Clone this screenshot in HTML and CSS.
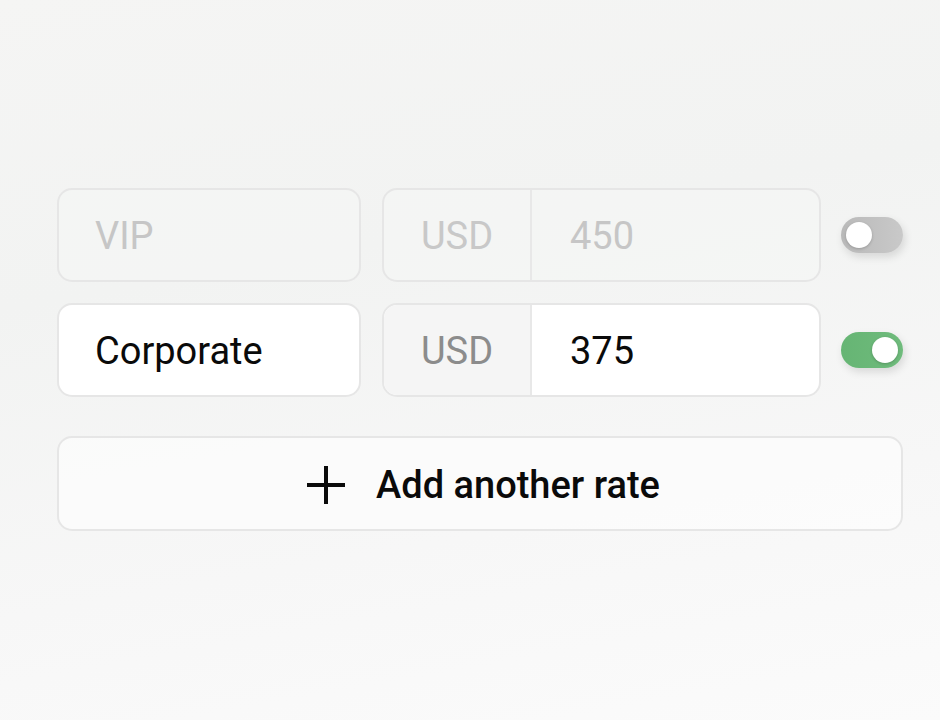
FILE: index.html
```html
<!DOCTYPE html>
<html>
<head>
<meta charset="utf-8">
<link rel="stylesheet" href="styles.css">
</head>
<body>
<div class="page">
  <div class="rates">
    <div class="row disabled">
      <div class="field name">VIP</div>
      <div class="field money">
        <div class="cur">USD</div>
        <div class="val">450</div>
      </div>
      <div class="toggle off"><span class="knob"></span></div>
    </div>
    <div class="row">
      <div class="field name">Corporate</div>
      <div class="field money">
        <div class="cur">USD</div>
        <div class="val">375</div>
      </div>
      <div class="toggle on"><span class="knob"></span></div>
    </div>
    <button class="add">
      <svg class="plus" width="40" height="40" viewBox="0 0 40 40"><path d="M20 1V39M1 20H39" stroke="#0a0a0a" stroke-width="4" fill="none"/></svg>
      <span>Add another rate</span>
    </button>
  </div>
</div>
</body>
</html>
```
FILE: styles.css
```css
html, body {
  margin: 0;
  padding: 0;
}
body {
  width: 940px;
  height: 720px;
  background: linear-gradient(170deg, #f5f5f4 0%, #f2f3f2 35%, #f7f7f7 70%, #fbfbfb 100%);
  font-family: Roboto, "Noto Sans", sans-serif;
  overflow: hidden;
}
.page {
  padding: 188px 37px 0 57px;
}
.rates {
  width: 846px;
  display: flex;
  flex-direction: column;
  gap: 21px;
}
.row {
  display: flex;
  align-items: center;
  gap: 21px;
}
.field {
  box-sizing: border-box;
  height: 94px;
  border: 2px solid #e6e6e6;
  border-radius: 15px;
  font-size: 38px;
  color: #0a0a0a;
  background: #fff;
  padding-top: 2px;
}
.name {
  width: 304px;
  display: flex;
  align-items: center;
  padding-left: 36px;
}
.money {
  width: 439px;
  display: flex;
  overflow: hidden;
  padding-top: 0;
}
.cur {
  width: 146px;
  flex: none;
  display: flex;
  align-items: center;
  justify-content: center;
  background: #f5f5f5;
  color: #8c8c8c;
  border-right: 2px solid #e8e8e8;
  padding-top: 2px;
}
.val {
  flex: 1;
  display: flex;
  align-items: center;
  padding-left: 38px;
  padding-top: 2px;
}
.disabled .field {
  background: rgba(245, 246, 245, 0.6);
  color: #c6c6c6;
  border-color: #e6e6e6;
}
.disabled .cur {
  background: transparent;
  color: #c8c8c8;
}
.toggle {
  margin-left: -1px;
  width: 62px;
  height: 36px;
  border-radius: 18px;
  position: relative;
  box-shadow: 2px 4px 8px rgba(0,0,0,0.12);
  flex: none;
}
.toggle.off {
  background: linear-gradient(90deg, #b9b9b9, #c9c9c9);
}
.toggle.on {
  background: linear-gradient(90deg, #66b574, #6fbb7c);
}
.knob {
  position: absolute;
  top: 5px;
  width: 26px;
  height: 26px;
  border-radius: 50%;
  background: #fff;
  box-shadow: 0 1px 3px rgba(0,0,0,0.2);
}
.off .knob { left: 5px; }
.on .knob { right: 5px; }
.add {
  margin-top: 18px;
  box-sizing: border-box;
  width: 846px;
  height: 95px;
  border: 2px solid #e6e6e6;
  border-radius: 15px;
  background: rgba(255,255,255,0.55);
  display: flex;
  align-items: center;
  justify-content: center;
  gap: 30px;
  font-family: Roboto, "Noto Sans", sans-serif;
  font-size: 38px;
  font-weight: 500;
  color: #0a0a0a;
  padding: 2px 0 0 6px;
}
.plus {
  flex: none;
}
```
